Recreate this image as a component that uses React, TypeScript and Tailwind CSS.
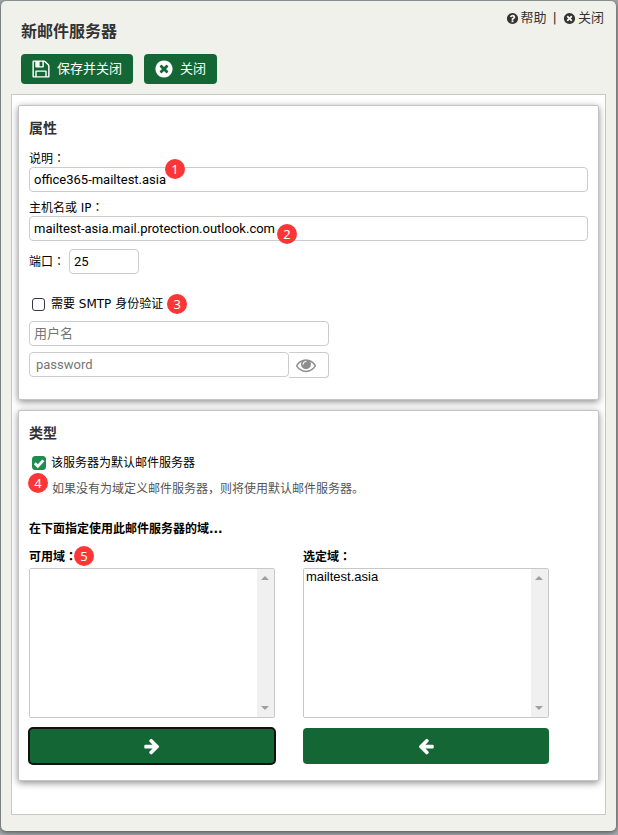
import React, { useState } from "react";

const icons = {
  save: "M512 1536h768v-384h-768v384zm896 0h128v-896q0-14-10-38.5t-20-34.5l-281-281q-10-10-34-20t-39-10v416q0 40-28 68t-68 28h-576q-40 0-68-28t-28-68v-416h-128v1280h128v-416q0-40 28-68t68-28h832q40 0 68 28t28 68v416zm-384-928v-320q0-13-9.5-22.5t-22.5-9.5h-192q-13 0-22.5 9.5t-9.5 22.5v320q0 13 9.5 22.5t22.5 9.5h192q13 0 22.5-9.5t9.5-22.5zm640 32v928q0 40-28 68t-68 28h-1344q-40 0-68-28t-28-68v-1344q0-40 28-68t68-28h928q40 0 88 20t76 48l280 280q28 28 48 76t20 88z",
  close:
    "M1277 1122q0-26-19-45l-181-181 181-181q19-19 19-45 0-27-19-46l-90-90q-19-19-46-19-26 0-45 19l-181 181-181-181q-19-19-45-19-27 0-46 19l-90 90q-19 19-19 46 0 26 19 45l181 181-181 181q-19 19-19 45 0 27 19 46l90 90q19 19 46 19 26 0 45-19l181-181 181 181q19 19 45 19 27 0 46-19l90-90q19-19 19-46zm387-226q0 209-103 385.5t-279.5 279.5-385.5 103-385.5-103-279.5-279.5-103-385.5 103-385.5 279.5-279.5 385.5-103 385.5 103 279.5 279.5 103 385.5z",
  help: "M1024 1376v-192q0-14-9-23t-23-9h-192q-14 0-23 9t-9 23v192q0 14 9 23t23 9h192q14 0 23-9t9-23zm256-672q0-88-55.5-163t-138.5-116-170-41q-243 0-371 213-15 24 8 42l132 100q7 6 19 6 16 0 25-12 53-68 86-92 34-24 86-24 48 0 85.5 26t37.5 59q0 38-20 61t-68 45q-63 28-115.5 86.5t-52.5 125.5v36q0 14 9 23t23 9h192q14 0 23-9t9-23q0-19 21.5-49.5t54.5-49.5q32-18 49-28.5t46-35 44.5-48 28-60.5 12.5-81zm384 192q0 209-103 385.5t-279.5 279.5-385.5 103-385.5-103-279.5-279.5-103-385.5 103-385.5 279.5-279.5 385.5-103 385.5 103 279.5 279.5 103 385.5z",
  eye: "M1664 960q-152-236-381-353 61 104 61 225 0 185-131.5 316.5t-316.5 131.5-316.5-131.5-131.5-316.5q0-121 61-225-229 117-381 353 133 205 333.5 326.5t434.5 121.5 434.5-121.5 333.5-326.5zm-720-384q0-20-14-34t-34-14q-125 0-214.5 89.5t-89.5 214.5q0 20 14 34t34 14 34-14 14-34q0-86 61-147t147-61q20 0 34-14t14-34zm848 384q0 34-20 69-140 230-376.5 368.5t-499.5 138.5-499.5-139-376.5-368q-20-35-20-69t20-69q140-229 376.5-368t499.5-139 499.5 139 376.5 368q20 35 20 69z",
  right:
    "M1600 960q0 54-37 91l-651 651q-39 37-91 37-51 0-90-37l-75-75q-38-38-38-91t38-91l293-293h-704q-52 0-84.5-37.5t-32.5-90.5v-128q0-53 32.5-90.5t84.5-37.5h704l-293-294q-38-36-38-90t38-90l75-75q38-38 90-38 53 0 91 38l651 651q37 35 37 90z",
  left: "M1664 896v128q0 53-32.5 90.5t-84.5 37.5h-704l293 294q38 36 38 90t-38 90l-75 76q-37 37-90 37-52 0-91-37l-651-652q-37-37-37-90 0-52 37-91l651-650q38-38 91-38 52 0 90 38l75 74q38 38 38 91t-38 91l-293 293h704q52 0 84.5 37.5t32.5 90.5z",
};

const inputClass =
  "h-[25px] rounded border border-[#ccc] bg-white px-1 font-['Roboto','Noto_Sans_CJK_SC',sans-serif] text-[13px] text-black placeholder:text-[#757575]";

function Icon({ name, className }: { name: keyof typeof icons; className: string }) {
  return (
    <svg
      xmlns="http://www.w3.org/2000/svg"
      viewBox="0 0 1792 1792"
      fill="currentColor"
      aria-hidden="true"
      className={`shrink-0 ${className}`}
    >
      <path d={icons[name]} />
    </svg>
  );
}

// the TC face centres the colon in its box
function Colon() {
  return (
    <span lang="zh-TW" className="font-['Noto_Sans_CJK_TC',sans-serif]">
      ：
    </span>
  );
}

function Badge({ n, className = "" }: { n: number; className?: string }) {
  return (
    <span
      className={`flex size-5 shrink-0 items-center justify-center rounded-full bg-[#fc3636] font-['Noto_Sans',sans-serif] text-[13px] leading-5 font-normal text-white ${className}`}
    >
      {n}
    </span>
  );
}

function Card({ title, children }: { title: string; children: React.ReactNode }) {
  return (
    <section className="rounded-xs border border-[#c4c4c4] bg-white px-2.5 pt-3 shadow-[0_2px_7px_rgba(0,0,0,0.45)]">
      <h2 className="text-sm leading-5 font-bold text-[#333]">{title}</h2>
      {children}
    </section>
  );
}

function CheckBox({
  id,
  label,
  checked,
  onChange,
}: {
  id: string;
  label: string;
  checked: boolean;
  onChange: (value: boolean) => void;
}) {
  return (
    <>
      <span className="relative ml-[3px] flex size-3.5 shrink-0 items-center">
        <input
          id={id}
          type="checkbox"
          checked={checked}
          onChange={(e) => onChange(e.target.checked)}
          className="size-[13px] appearance-none rounded-[3px] border border-[#3d3347] bg-white checked:size-3.5 checked:border-[#1e8e4e] checked:bg-[#1e8e4e]"
        />
        {checked && (
          <svg
            viewBox="0 0 14 14"
            fill="none"
            stroke="white"
            strokeWidth="2.8"
            className="pointer-events-none absolute inset-0 size-3.5"
          >
            <path d="M2.8 7.2l3 3 5.6-5.8" />
          </svg>
        )}
      </span>
      <label htmlFor={id} className="ml-[5px]">
        {label}
      </label>
    </>
  );
}

function DomainList({ id, domains }: { id: string; domains: string[] }) {
  return (
    <div className="flex h-[150px] overflow-hidden rounded-xs border border-[#c8c8c8]">
      <select
        id={id}
        multiple
        className="min-w-0 flex-1 overflow-hidden bg-white bg-none font-['Liberation_Sans',sans-serif] text-[13px] leading-4 text-black"
      >
        {domains.map((domain) => (
          <option key={domain} className="px-0.5 py-0">
            {domain}
          </option>
        ))}
      </select>
      {/* always visible scroll track */}
      <div
        aria-hidden="true"
        className="flex w-[17px] flex-col items-center justify-between bg-[#f0f0f0] py-[7px] text-[#a0a0a0]"
      >
        <svg viewBox="0 0 8 4" className="h-1 w-2" fill="currentColor">
          <path d="M0 4L4 0l4 4z" />
        </svg>
        <svg viewBox="0 0 8 4" className="h-1 w-2" fill="currentColor">
          <path d="M0 0h8L4 4z" />
        </svg>
      </div>
    </div>
  );
}

export default function App() {
  const [description, setDescription] = useState("office365-mailtest.asia");
  const [host, setHost] = useState("mailtest-asia.mail.protection.outlook.com");
  const [port, setPort] = useState("25");
  const [smtpAuth, setSmtpAuth] = useState(false);
  const [isDefault, setIsDefault] = useState(true);
  const [showPassword, setShowPassword] = useState(false);

  return (
    <div
      lang="zh-CN"
      className="flex min-h-screen flex-col bg-[#a3a9ac] pt-px pr-0.5 pb-1 pl-px font-['DejaVu_Sans','Noto_Sans_CJK_SC',sans-serif] text-xs leading-5 text-black"
    >
      <main className="flex flex-1 flex-col rounded-[5px] bg-[#f0f1eb] px-2.5 pb-4 shadow-[0_1px_5px_rgba(0,0,0,0.6)]">
        <header className="flex items-start justify-between pb-2.5 pl-2.5">
          <div className="pt-[21px]">
            <h1 className="text-base leading-5 font-bold text-[#333]">新邮件服务器</h1>
            <div className="mt-3 flex gap-[11px] text-[13px] text-white">
              <button className="flex h-[30px] items-center gap-1.5 rounded bg-[#146735] pr-[11px] pl-2.5">
                <Icon name="save" className="size-5" />
                保存并关闭
              </button>
              <button className="flex h-[30px] items-center gap-1.5 rounded bg-[#146735] pr-[11px] pl-2.5">
                <Icon name="close" className="size-5" />
                关闭
              </button>
            </div>
          </div>
          <nav className="flex items-center pt-[7px] pr-0.5 text-[13px] text-[#333]">
            <a href="#" className="flex items-center gap-0.5">
              <Icon name="help" className="size-[13px]" />
              帮助
            </a>
            <span className="px-1.5">|</span>
            <a href="#" className="flex items-center gap-0.5">
              <Icon name="close" className="size-[13px]" />
              关闭
            </a>
          </nav>
        </header>

        <div className="flex flex-1 flex-col gap-2.5 border border-[#c8c8c8] bg-white px-1.5 pt-2.5 pb-8">
          <Card title="属性">
            <div className="mt-[11px] flex flex-col">
              <label htmlFor="description" className="h-[18px] leading-[18px]">
                说明
                <Colon />
              </label>
              <div className="relative flex">
                <input
                  id="description"
                  className={`w-full ${inputClass}`}
                  value={description}
                  onChange={(e) => setDescription(e.target.value)}
                />
                <Badge n={1} className="absolute -top-2 left-34" />
              </div>
            </div>

            <div className="mt-1.5 flex flex-col">
              <label htmlFor="host" className="h-[18px] leading-[18px]">
                主机名或 IP
                <Colon />
              </label>
              <div className="relative flex">
                <input
                  id="host"
                  className={`w-full ${inputClass}`}
                  value={host}
                  onChange={(e) => setHost(e.target.value)}
                />
                <Badge n={2} className="absolute top-2 left-62" />
              </div>
            </div>

            <div className="mt-2 flex items-center gap-1">
              <label htmlFor="port">
                端口
                <Colon />
              </label>
              <input
                id="port"
                className={`w-[70px] ${inputClass}`}
                value={port}
                onChange={(e) => setPort(e.target.value)}
              />
            </div>

            <div className="mt-5 flex items-center">
              <CheckBox
                id="smtp"
                label="需要 SMTP 身份验证"
                checked={smtpAuth}
                onChange={setSmtpAuth}
              />
              <Badge n={3} className="ml-1" />
            </div>

            <div className="mt-[7px] mb-[21px] flex max-w-[300px] flex-col gap-1.5">
              <input aria-label="用户名" placeholder="用户名" className={inputClass} />
              <div className="flex">
                <input
                  type={showPassword ? "text" : "password"}
                  aria-label="password"
                  placeholder="password"
                  className={`min-w-0 flex-1 indent-0.5 ${inputClass}`}
                />
                <button
                  aria-label="显示密码"
                  onClick={() => setShowPassword(!showPassword)}
                  className="flex h-[26px] w-10 items-center rounded-r border border-l-0 border-[#ccc] pl-[7px] text-[#8e8e8e]"
                >
                  <Icon name="eye" className="size-5" />
                </button>
              </div>
            </div>
          </Card>

          <Card title="类型">
            <div className="relative mt-2.5 flex items-center">
              <CheckBox
                id="default"
                label="该服务器为默认邮件服务器"
                checked={isDefault}
                onChange={setIsDefault}
              />
              <Badge n={4} className="absolute top-5 -left-px" />
            </div>
            <p className="mt-1.5 pl-[23px] text-[#555]">
              如果没有为域定义邮件服务器，则将使用默认邮件服务器。
            </p>

            <p className="mt-5 font-bold">在下面指定使用此邮件服务器的域...</p>
            <div className="mt-[7px] mb-4 flex gap-[5%]">
              <div className="flex w-[44%] flex-col">
                <div className="mb-0.5 flex h-5 items-center">
                  <label htmlFor="available" className="h-5 font-bold">
                    可用域
                    <Colon />
                  </label>
                  <Badge n={5} className="-ml-[3px]" />
                </div>
                <DomainList id="available" domains={[]} />
                <button
                  aria-label="添加"
                  className="mt-2.5 flex h-9 items-center justify-center rounded bg-[#146735] text-white outline-2 -outline-offset-1 outline-[#111]"
                >
                  <Icon name="right" className="size-[18px]" />
                </button>
              </div>
              <div className="flex w-[44%] flex-col">
                <label htmlFor="selected" className="mb-0.5 h-5 font-bold">
                  选定域
                  <Colon />
                </label>
                <DomainList id="selected" domains={["mailtest.asia"]} />
                <button
                  aria-label="移除"
                  className="mt-2.5 flex h-9 items-center justify-center rounded bg-[#146735] text-white"
                >
                  <Icon name="left" className="size-[18px]" />
                </button>
              </div>
            </div>
          </Card>
        </div>
      </main>
    </div>
  );
}
